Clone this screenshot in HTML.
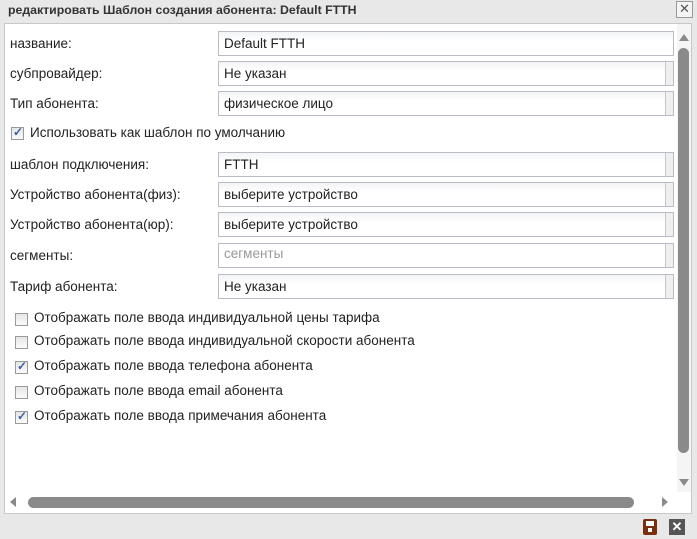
<!DOCTYPE html>
<html><head><meta charset="utf-8"><style>
*{box-sizing:border-box}
body{margin:0;width:697px;height:539px;background:#e8e8e8;font-family:"Liberation Sans",sans-serif;font-size:13.5px;color:#222;position:relative;overflow:hidden}
.a{position:absolute}
.title{left:8px;top:3px;font-weight:bold;font-size:12.3px;color:#333}
.close{left:676px;top:1px;width:17px;height:17px;border:1px solid #999;background:#f4f4f4;font-size:13px;text-align:center;line-height:14px;color:#555}
.panel{left:4px;top:23px;width:688px;height:491px;background:#fff;border:1px solid #c8c8c8}
.lbl{left:10px}
.inp{left:218px;width:456px;height:25px;border:1px solid #b9bcc4;background:linear-gradient(#f3f4f6,#fff 40%);padding:4px 5px;font-size:13.5px}
.sel::after{content:"";position:absolute;right:0;top:0;width:7px;height:23px;border-left:1px solid #c6c6c6;background:#efefef}
.cb{width:13px;height:13px;border:1px solid #9a9a9a;background:linear-gradient(#e6e6e6,#fafafa);left:15px}
.ck::after{content:"✓";position:absolute;left:1px;top:-3px;font-size:12px;color:#3a5fa0;font-weight:bold}
.ct{left:34px}
</style></head><body>
<div class="a title">редактировать Шаблон создания абонента: Default FTTH</div>
<div class="a close">✕</div>
<div class="a panel"></div>
<div class="a lbl" style="top:36px">название:</div>
<div class="a inp" style="top:31px">Default FTTH</div>
<div class="a lbl" style="top:66px">субпровайдер:</div>
<div class="a inp sel" style="top:61px">Не указан</div>
<div class="a lbl" style="top:96px">Тип абонента:</div>
<div class="a inp sel" style="top:91px">физическое лицо</div>
<div class="a cb ck" style="left:11px;top:127px"></div>
<div class="a" style="left:30px;top:125px">Использовать как шаблон по умолчанию</div>
<div class="a lbl" style="top:157px">шаблон подключения:</div>
<div class="a inp sel" style="top:152px">FTTH</div>
<div class="a lbl" style="top:187px">Устройство абонента(физ):</div>
<div class="a inp sel" style="top:182px">выберите устройство</div>
<div class="a lbl" style="top:217px">Устройство абонента(юр):</div>
<div class="a inp sel" style="top:212px">выберите устройство</div>
<div class="a lbl" style="top:248px">сегменты:</div>
<div class="a inp sel" style="top:243px;color:#999;padding-top:2px;background:#fff">сегменты</div>
<div class="a lbl" style="top:279px">Тариф абонента:</div>
<div class="a inp sel" style="top:274px">Не указан</div>
<div class="a cb" style="top:313px"></div><div class="a ct" style="top:310px">Отображать поле ввода индивидуальной цены тарифа</div>
<div class="a cb" style="top:336px"></div><div class="a ct" style="top:333px">Отображать поле ввода индивидуальной скорости абонента</div>
<div class="a cb ck" style="top:361px"></div><div class="a ct" style="top:358px">Отображать поле ввода телефона абонента</div>
<div class="a cb" style="top:386px"></div><div class="a ct" style="top:383px">Отображать поле ввода email абонента</div>
<div class="a cb ck" style="top:411px"></div><div class="a ct" style="top:408px">Отображать поле ввода примечания абонента</div>
<div class="a" style="left:677px;top:24px;width:14px;height:468px;background:#f5f5f5"></div>
<div class="a" style="left:679px;top:34px;width:0;height:0;border-left:5px solid transparent;border-right:5px solid transparent;border-bottom:7px solid #8a8a8a"></div>
<div class="a" style="left:678px;top:48px;width:11px;height:405px;background:#8a8a8a;border-radius:6px"></div>
<div class="a" style="left:679px;top:479px;width:0;height:0;border-left:5px solid transparent;border-right:5px solid transparent;border-top:7px solid #8a8a8a"></div>
<div class="a" style="left:10px;top:497px;width:0;height:0;border-top:5px solid transparent;border-bottom:5px solid transparent;border-right:6px solid #8a8a8a"></div>
<div class="a" style="left:28px;top:497px;width:606px;height:11px;background:#8a8a8a;border-radius:6px"></div>
<div class="a" style="left:662px;top:497px;width:0;height:0;border-top:5px solid transparent;border-bottom:5px solid transparent;border-left:6px solid #8a8a8a"></div>
<div class="a" style="left:643px;top:519px;width:14px;height:16px;background:#7a2e0e;border-radius:2px"><div class="a" style="left:3px;top:2px;width:8px;height:5px;background:#fff"></div><div class="a" style="left:5px;top:9px;width:4px;height:4px;background:#fff"></div></div>
<div class="a" style="left:669px;top:519px;width:16px;height:16px;background:#555;color:#fff;font-size:13px;font-weight:bold;text-align:center;line-height:16px">✕</div>
</body></html>
